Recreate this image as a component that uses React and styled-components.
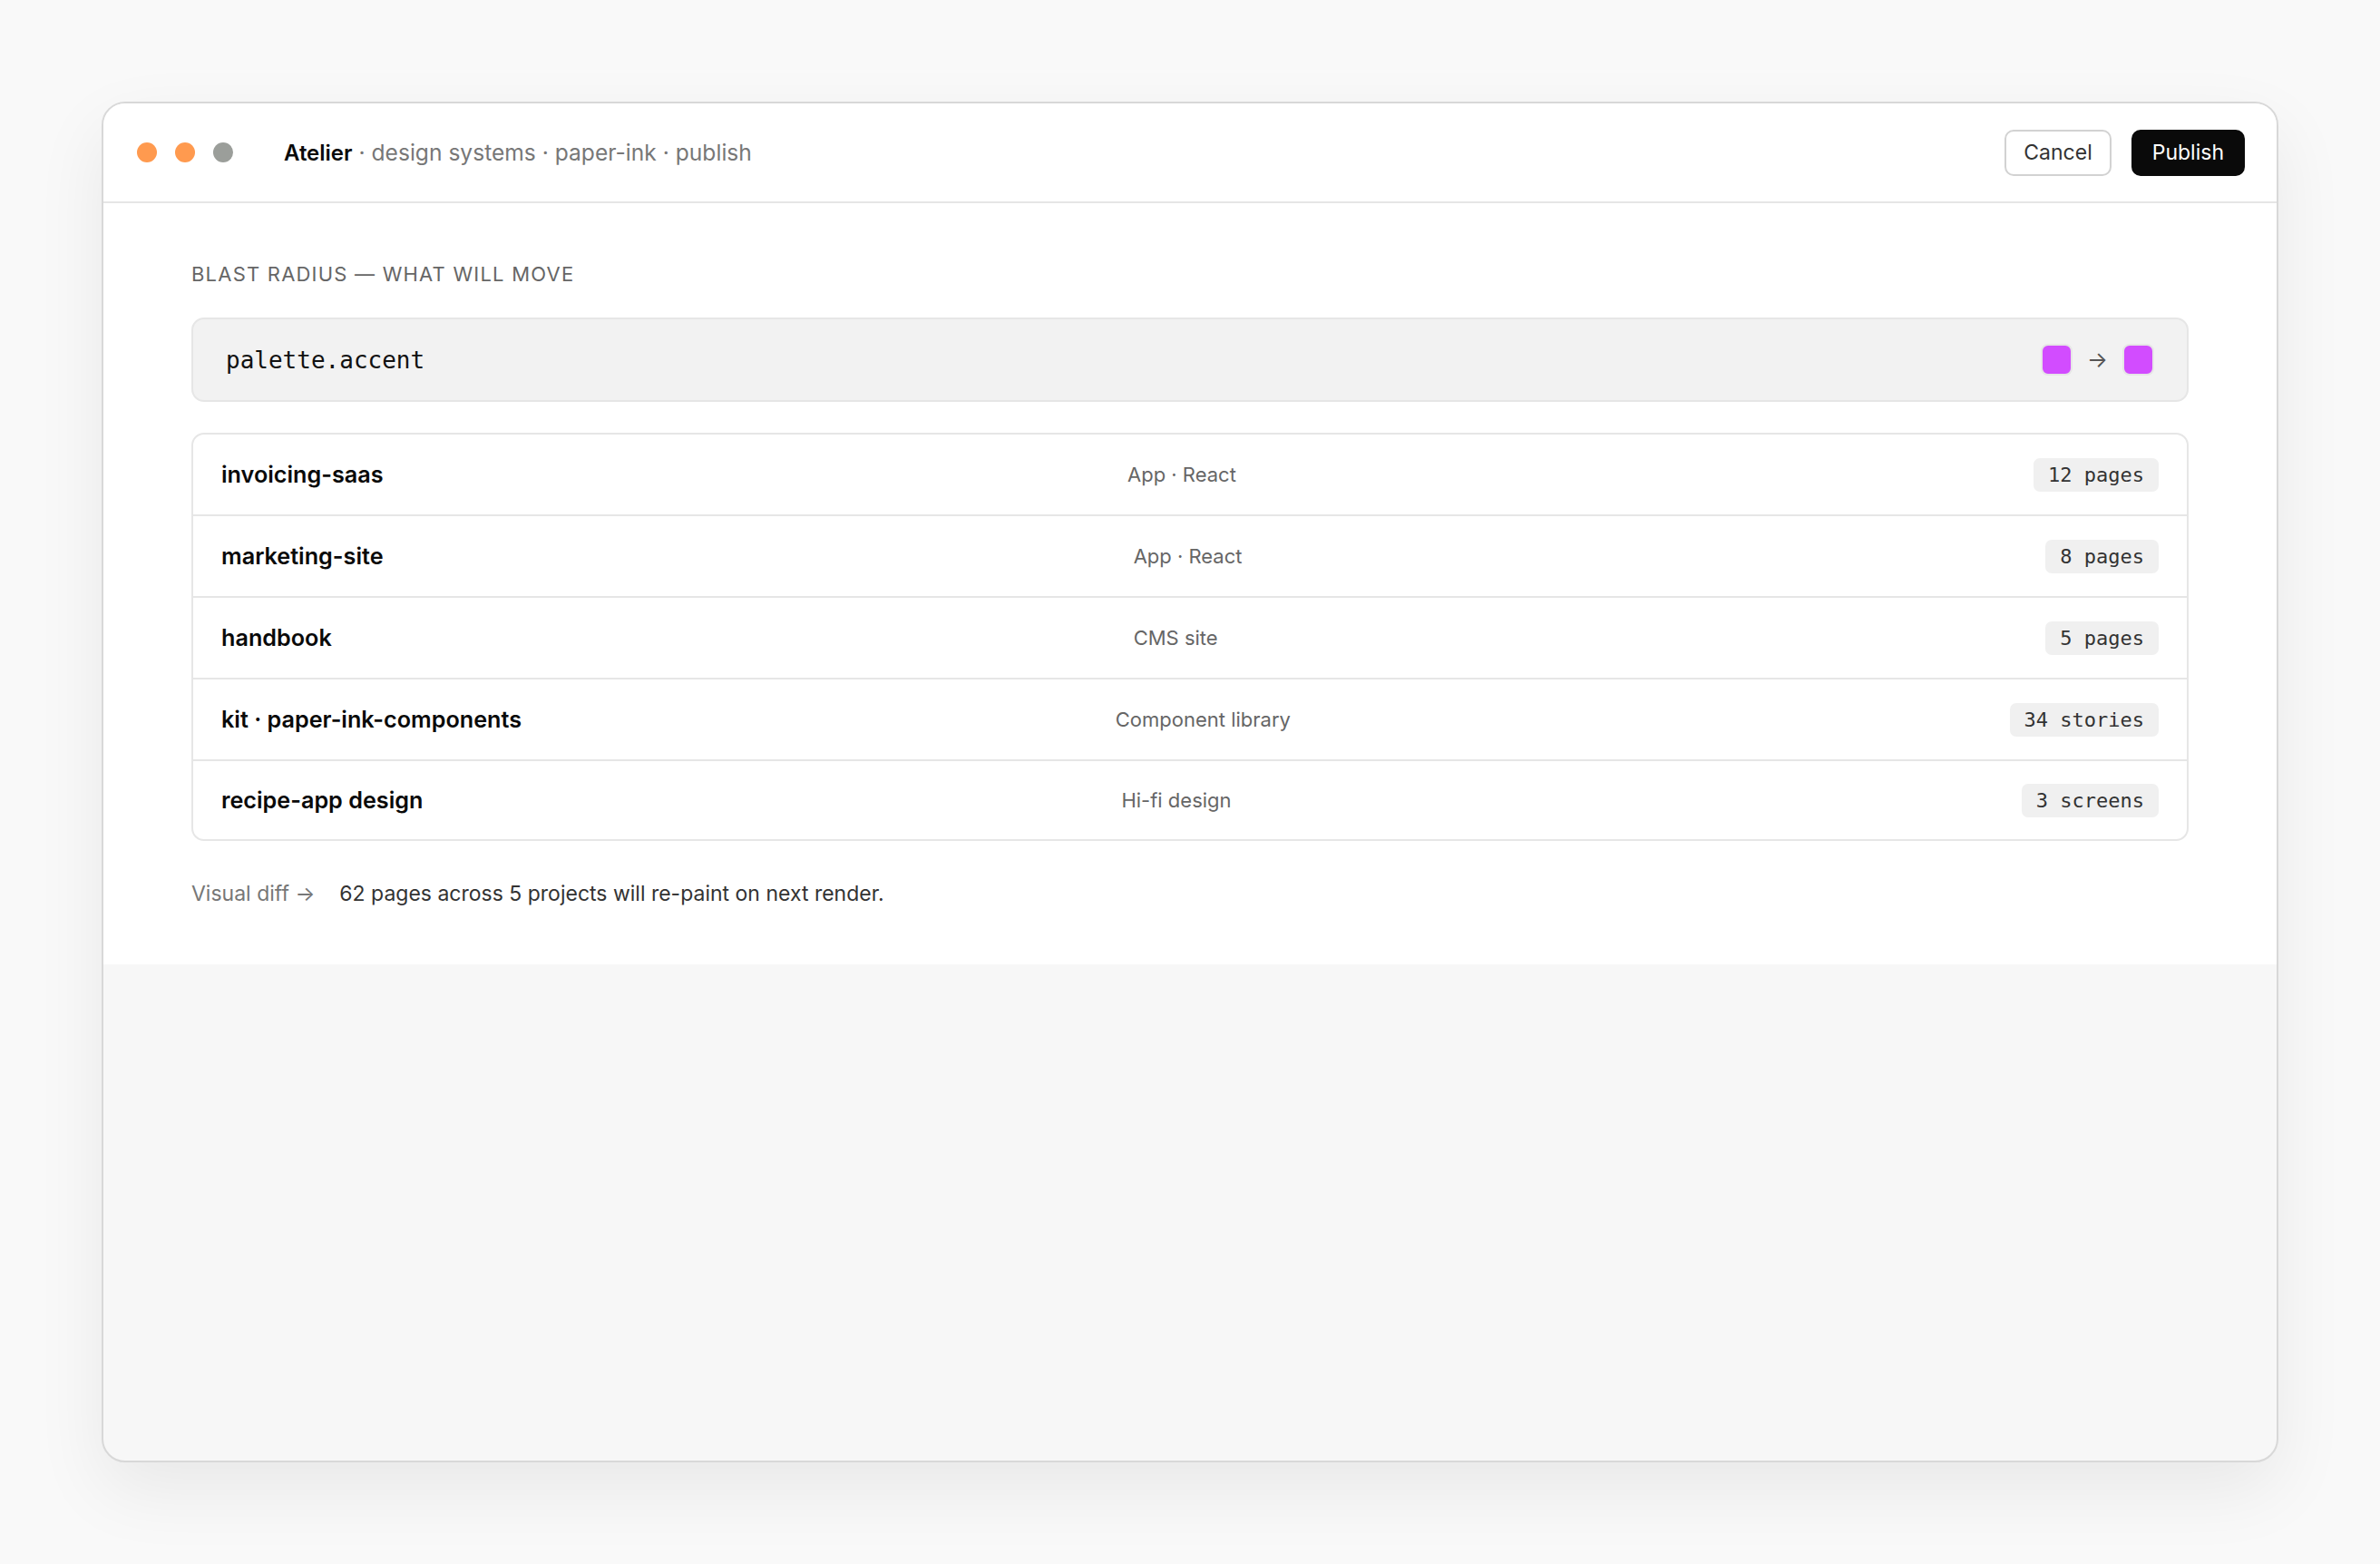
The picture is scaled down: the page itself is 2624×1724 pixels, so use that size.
import React from "react";
import styled, { createGlobalStyle } from "styled-components";

const projects = [
	{ name: "invoicing-saas", kind: "App · React", count: "12 pages" },
	{ name: "marketing-site", kind: "App · React", count: "8 pages" },
	{ name: "handbook", kind: "CMS site", count: "5 pages" },
	{ name: "kit · paper-ink-components", kind: "Component library", count: "34 stories" },
	{ name: "recipe-app design", kind: "Hi-fi design", count: "3 screens" },
];

function App() {
	return (
		<>
			<GlobalStyle />
			<Page>
				<Window>
					<TitleBar>
						<Dots>
							<Dot color='#ff9a4f' />
							<Dot color='#ff9a4f' />
							<Dot color='#9b9e9a' />
						</Dots>
						<Crumbs>
							<strong>Atelier</strong> · design systems · paper-ink · publish
						</Crumbs>
						<Actions>
							<Button>Cancel</Button>
							<Button primary>Publish</Button>
						</Actions>
					</TitleBar>

					<Content>
						<Label>Blast radius — what will move</Label>
						<TokenCard>
							<TokenName>palette.accent</TokenName>
							<SwatchPair>
								<Swatch />
								<Arrow>→</Arrow>
								<Swatch />
							</SwatchPair>
						</TokenCard>

						<Table>
							{projects.map((p) => (
								<Row key={p.name}>
									<Name>{p.name}</Name>
									<Kind>{p.kind}</Kind>
									<Count>{p.count}</Count>
								</Row>
							))}
						</Table>

						<Footer>
							<DiffLink>Visual diff →</DiffLink>
							<span>62 pages across 5 projects will re-paint on next render.</span>
						</Footer>
					</Content>
				</Window>
			</Page>
		</>
	);
}

export default App;

const GlobalStyle = createGlobalStyle`
	html, body {
		margin: 0;
		padding: 0;
		background: #f9f9f9;
		font-family: Inter, "Noto Sans", sans-serif;
		color: #111;
	}
	* {
		box-sizing: border-box;
	}
`;

const Page = styled.div`
	width: 2624px;
	height: 1724px;
	display: flex;
	align-items: center;
	justify-content: center;
	background: #f9f9f9;
`;

const Window = styled.div`
	width: 2400px;
	height: 1500px;
	background: #f7f7f7;
	border: 2px solid #d8d8d8;
	border-radius: 26px;
	overflow: hidden;
	box-shadow: 0 30px 80px rgba(0, 0, 0, 0.07);
	display: flex;
	flex-direction: column;
`;

const TitleBar = styled.div`
	height: 110px;
	flex-shrink: 0;
	background: #fff;
	border-bottom: 2px solid #e6e6e6;
	display: flex;
	align-items: center;
	padding: 0 35px 0 37px;
`;

const Dots = styled.div`
	display: flex;
	gap: 20px;
	margin-right: 56px;
`;

const Dot = styled.span`
	width: 22px;
	height: 22px;
	border-radius: 50%;
	background: ${(p) => p.color};
`;

const Crumbs = styled.div`
	font-size: 24.6px;
	color: #777;
	flex: 1;

	strong {
		color: #0a0a0a;
		font-size: 24px;
		font-weight: 600;
	}
`;

const Actions = styled.div`
	display: flex;
	gap: 22px;
`;

const Button = styled.button`
	height: 51px;
	padding: 0 ${(p) => (p.primary ? "21px" : "19px")};
	border-radius: 10px;
	font-family: Inter, sans-serif;
	font-size: 23px;
	border: 2px solid ${(p) => (p.primary ? "#0a0a0a" : "#d2d2d2")};
	background: ${(p) => (p.primary ? "#0a0a0a" : "#fff")};
	color: ${(p) => (p.primary ? "#fff" : "#333")};
	cursor: pointer;
`;

const Content = styled.div`
	background: #fff;
	padding: 64px 97px 64px;
`;

const Label = styled.div`
	font-size: 22px;
	line-height: 28px;
	letter-spacing: 0.055em;
	text-transform: uppercase;
	color: #666;
	margin-bottom: 34px;
`;

const TokenCard = styled.div`
	height: 93px;
	display: flex;
	align-items: center;
	justify-content: space-between;
	padding: 0 36px;
	background: #f2f2f2;
	border: 2px solid #e6e6e6;
	border-radius: 14px;
`;

const TokenName = styled.div`
	font-family: "DejaVu Sans Mono", "Liberation Mono", monospace;
	font-size: 26px;
	color: #111;
`;

const SwatchPair = styled.div`
	display: flex;
	align-items: center;
	gap: 16px;
`;

const Swatch = styled.span`
	width: 35px;
	height: 35px;
	border-radius: 8px;
	background: #d24cff;
	border: 2px solid #e6e6e6;
`;

const Arrow = styled.span`
	font-size: 24px;
	color: #555;
`;

const Table = styled.div`
	margin-top: 34px;
	border: 2px solid #e6e6e6;
	border-radius: 14px;
	overflow: hidden;
`;

const Row = styled.div`
	height: 90px;
	display: grid;
	grid-template-columns: 1fr 1fr auto;
	align-items: center;
	padding: 0 31px;
	border-bottom: 2px solid #e6e6e6;

	&:last-child {
		border-bottom: none;
		height: 86px;
	}
`;

const Name = styled.div`
	font-size: 25.2px;
	font-weight: 600;
	color: #0a0a0a;
`;

const Kind = styled.div`
	font-size: 22px;
	color: #666;
`;

const Count = styled.div`
	font-family: "DejaVu Sans Mono", "Liberation Mono", monospace;
	font-size: 22px;
	color: #333;
	background: #f0f0f0;
	border-radius: 7px;
	padding: 6px 16px;
`;

const Footer = styled.div`
	margin-top: 44px;
	display: flex;
	gap: 27px;
	font-size: 23px;
	line-height: 28px;
	color: #333;
`;

const DiffLink = styled.span`
	color: #777;
`;
